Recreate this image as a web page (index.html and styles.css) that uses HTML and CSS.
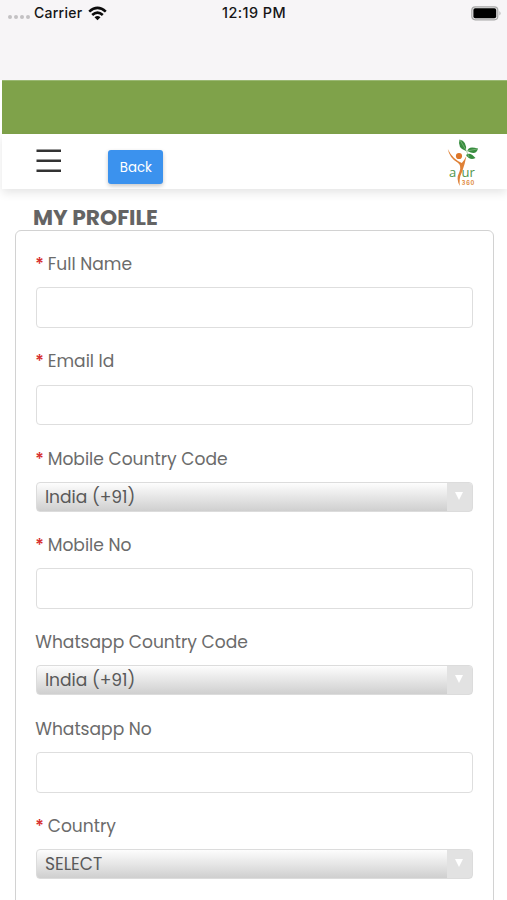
FILE: index.html
```html
<!DOCTYPE html>
<html lang="en">
<head>
<meta charset="utf-8">
<title>My Profile</title>
<link rel="stylesheet" href="styles.css">
</head>
<body>
<div class="status">
  <div class="signal"><i></i><i></i><i></i><i></i></div>
  <span class="carrier">Carrier</span>
  <svg class="wifi" width="19" height="15" viewBox="0 0 19 15"><g fill="none" stroke="#0c0c0c" stroke-width="2.6"><path d="M1.2 5.6Q9.5-2 17.8 5.6"/><path d="M4.2 9Q9.5 4.2 14.8 9"/></g><path d="M6.5 11.2Q9.5 8.8 12.5 11.2L9.5 14.2Z" fill="#0c0c0c"/></svg>
  <span class="time">12:19 PM</span>
  <svg class="battery" width="31" height="15" viewBox="0 0 31 15"><rect x=".8" y=".8" width="26" height="13" rx="3.5" fill="#e9e8e9" stroke="#a8a8a8" stroke-width="1.2"/><rect x="2.4" y="2.3" width="22.8" height="10" rx="1.8"/><path d="M28.5 5Q30.5 7.3 28.5 9.6Z" fill="#a8a8a8"/></svg>
</div>
<div class="banner"></div>
<header class="nav">
  <svg class="menu" width="26" height="24" viewBox="0 0 26 24"><path d="M.5 1.8H25M.5 11.8H25M.5 21.8H25" stroke="#333" stroke-width="2.4"/></svg>
  <button class="back">Back</button>
  <svg class="logo" width="34" height="50" viewBox="0 0 34 50">
    <g fill="#388d40"><path d="M13.5 1.5Q21 3 20 13Q11 10 13.5 1.5Z"/><path d="M21.5 13Q22 7.5 32 10.5Q30 18 21.5 13Z"/><path d="M20 17Q24 13.5 29.5 20Q24 23 20 17Z"/></g>
    <path d="M14 2L20.5 13L23 19M21 13L31 11" stroke="#8fc088" stroke-width=".7" fill="none"/>
    <circle cx="13" cy="18" r="3.1" fill="#dc762a"/>
    <path d="M1.8 11Q3.5 20 11.5 24.5Q16 27.5 13.4 34Q9.5 41 14 48Q12.5 41 16 34Q19 26 20.4 18Q18.5 22 15.8 25Q6.5 21 1.8 11Z" fill="#df8137"/>
    <text x="3" y="39.2" class="logo-word">a</text><text x="15.6" y="39.2" class="logo-word">ur</text>
    <text x="15.8" y="47" class="logo-num" textLength="12.5">360</text>
  </svg>
</header>
<main>
  <h1>MY PROFILE</h1>
  <form class="panel">
    <div class="field"><label><b>*</b><span>Full Name</span></label><div class="input"></div></div>
    <div class="field"><label><b>*</b><span>Email Id</span></label><div class="input"></div></div>
    <div class="field"><label><b>*</b><span>Mobile Country Code</span></label><div class="select"><span>India (+91)</span><i></i></div></div>
    <div class="field"><label><b>*</b><span>Mobile No</span></label><div class="input"></div></div>
    <div class="field"><label><span>Whatsapp Country Code</span></label><div class="select"><span>India (+91)</span><i></i></div></div>
    <div class="field"><label><span>Whatsapp No</span></label><div class="input"></div></div>
    <div class="field"><label><b>*</b><span>Country</span></label><div class="select"><span>SELECT</span><i></i></div></div>
  </form>
</main>
</body>
</html>
```
FILE: styles.css
```css
* { box-sizing: border-box; }
body { margin: 0; height: 900px; overflow: hidden; background: #fff; font-family: Poppins, Inter, sans-serif; color: #6b6b6b; }

.status { height: 80px; background: #f7f5f7; display: grid; grid-template-columns: 34px 54px 134px 249px 31px; align-items: start; padding-top: 5px; color: #161616; font: 500 14px/16px Inter, sans-serif; }
.carrier { letter-spacing: .25px; }
.time { font-size: 14.4px; letter-spacing: .45px; }
.signal { display: flex; gap: 2px; padding: 10px 0 0 8px; }
.signal i { width: 4px; height: 4px; border-radius: 50%; background: #c3c1c3; }
.wifi { margin-top: 1px; }
.battery { margin-top: 1px; }

.banner { height: 54px; margin-left: 2px; background: #7fa24a; border-top: 1px solid #9ab873; }

.nav { height: 55px; margin-left: 2px; padding: 0 27px 0 34px; display: flex; align-items: flex-start; box-shadow: 0 4px 9px rgba(0,0,0,.1); }
.menu { margin: 15px 46.4px 0 0; }
.back { width: 55px; height: 34px; margin-top: 16px; padding: 0; border: 0; border-radius: 3px; background: #3b92ee; color: #fff; font: 400 13.3px/35px Poppins, Inter, sans-serif; box-shadow: 0 2px 4px rgba(0,0,0,.22); }
.logo { margin: 4px 0 0 auto; }
.logo-word { font: 400 13px "Open Sans", sans-serif; fill: #4f954a; }
.logo-num { font: 700 5.5px Inter, sans-serif; fill: #e08a40; }

h1 { margin: 17px 0 0 33px; height: 24px; font-size: 21.8px; line-height: 24px; font-weight: 700; color: #646464; white-space: nowrap; }

.panel { width: 479px; height: 700px; margin-left: 14.5px; padding: 23.2px 20px 0; border: 1px solid #d2d2d2; border-radius: 6px; background: #fff; }
.field { margin-bottom: 23.4px; }
label { display: flex; height: 20px; margin: 0 0 13.2px -.3px; font-size: 17.1px; line-height: 21px; white-space: nowrap; }
label b { width: 12.5px; color: #d62c2c; font-weight: 500; }
.input { height: 40.6px; border: 1px solid #dedede; border-radius: 4px; }
.select { height: 30px; display: flex; justify-content: space-between; border: 1px solid #dcdcdc; border-radius: 4px; background: linear-gradient(#fdfdfd, #cfcfcf); font-size: 17.1px; line-height: 29px; color: #595959; overflow: hidden; padding-left: 8.4px; }
.select i { width: 25px; background: #e2e2e2; display: grid; place-items: center; }
.select i::before { content: ""; margin-top: -2px; border: 4.5px solid transparent; border-top: 8px solid #fff; border-bottom: 0; }
```
